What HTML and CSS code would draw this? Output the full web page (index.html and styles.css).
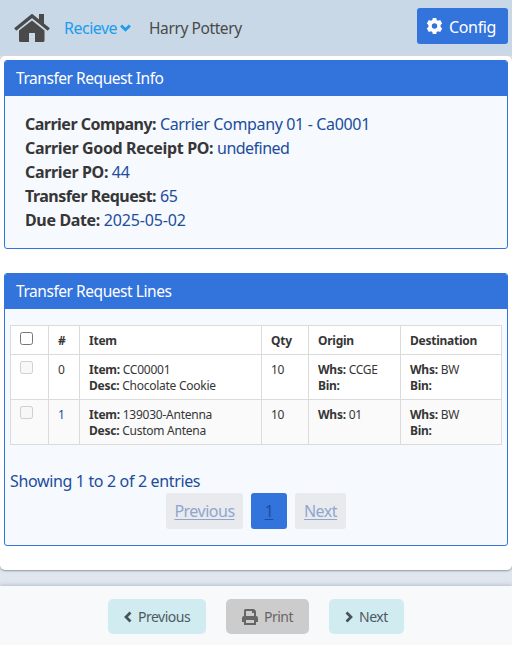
FILE: index.html
```html
<!DOCTYPE html>
<html lang="en">
<head>
<meta charset="utf-8">
<title>Transfer Request</title>
<link rel="stylesheet" href="styles.css">
</head>
<body>
<header class="navbar">
  <svg class="home" viewBox="0 0 36 28"><path fill="none" stroke="#4a4a4a" stroke-width="3.400" d="M1.200 15.500 18 1.900 34.800 15.500"/><path fill="#4a4a4a" d="M25 0h5v10l-5-4zM18 6.500 30.500 16.500v10q0 1.500-1.500 1.500H21v-9h-6v9H6.500q-1.500 0-1.500-1.500v-10z"/></svg>
  <div class="menu"><span>Recieve</span><svg class="caret" viewBox="0 0 10 7"><path d="M1 1.300 5 5.100 9 1.300"/></svg></div>
  <span class="user">Harry Pottery</span>
  <button class="config"><svg viewBox="0 0 16 16"><path fill="#fff" fill-rule="evenodd" d="M6.300 0h3.400l.5 2 1.300.8 2.200-.7 2 3.300-1.600 1.600v2l1.600 1.600-2 3.300-2.200-.7-1.300.8-.5 2H6.300l-.5-2-1.300-.8-2.200.7-2-3.300L1.900 9V7L.3 5.400l2-3.300 2.200.7L5.800 2zM8 5.300a2.700 2.700 0 1 0 0 5.400 2.700 2.700 0 0 0 0-5.400z"/></svg><span>Config</span></button>
</header>
<main class="card">
  <section class="panel info">
    <h2>Transfer Request Info</h2>
    <div class="details">
      <p><b class="tight">Carrier Company:</b> <span>Carrier Company 01 - Ca0001</span></p>
      <p><b>Carrier Good Receipt PO:</b> <span class="tight">undefined</span></p>
      <p><b>Carrier PO:</b> <span>44</span></p>
      <p><b class="tight">Transfer Request:</b> <span>65</span></p>
      <p><b>Due Date:</b> <span class="date">2025-05-02</span></p>
    </div>
  </section>
  <section class="panel lines">
    <h2>Transfer Request Lines</h2>
    <table>
      <colgroup><col class="c-check"><col class="c-num"><col class="c-item"><col class="c-qty"><col class="c-origin"><col class="c-dest"></colgroup>
      <thead><tr><th><input type="checkbox"></th><th>#</th><th>Item</th><th>Qty</th><th>Origin</th><th>Destination</th></tr></thead>
      <tbody>
        <tr><td><input type="checkbox" disabled></td><td>0</td><td><b>Item:</b> CC00001<br><b>Desc:</b> Chocolate Cookie</td><td>10</td><td><b>Whs:</b> CCGE<br><b>Bin:</b></td><td><b>Whs:</b> BW<br><b>Bin:</b></td></tr>
        <tr><td><input type="checkbox" disabled></td><td class="blue">1</td><td><b>Item:</b> 139030-Antenna<br><b>Desc:</b> Custom Antena</td><td>10</td><td><b>Whs:</b> 01</td><td><b>Whs:</b> BW<br><b>Bin:</b></td></tr>
      </tbody>
    </table>
    <div class="summary">Showing 1 to 2 of 2 entries</div>
    <nav class="pages"><a class="prev">Previous</a><a class="current">1</a><a class="next">Next</a></nav>
  </section>
</main>
<footer>
  <button class="back"><svg class="chev" viewBox="0 0 8 12"><path d="M6.500 1.500 2 6l4.500 4.500"/></svg><span>Previous</span></button>
  <button class="print"><svg class="printer" viewBox="0 0 16 16"><path fill="#666" fill-rule="evenodd" d="M2 7V1.500Q2 0 3.500 0H12l2 2v5q2 0 2 2v4h-2v3H2v-3H0V9q0-2 2-2zM4 2v5h8V4h-2V2zM4 11v3h8v-3z"/></svg><span>Print</span></button>
  <button class="forward"><svg class="chev" viewBox="0 0 8 12"><path d="M1.500 1.500 6 6l-4.500 4.500"/></svg><span>Next</span></button>
</footer>
</body>
</html>
```
FILE: styles.css
```css
* { box-sizing: border-box; }
body {
  margin: 0;
  height: 645px;
  display: flex;
  flex-direction: column;
  overflow: hidden;
  background: #dfe6ee;
  color: #363636;
  font: 16px/24px "Noto Sans", "Open Sans", sans-serif;
  letter-spacing: -0.35px;
  white-space: nowrap;
}
h2, p { margin: 0; font-weight: 400; }
button { border: 0; margin: 0; padding: 0; font: inherit; letter-spacing: inherit; display: flex; align-items: center; }
svg { display: block; flex: none; }
.navbar { height: 56px; flex: none; display: flex; align-items: center; padding: 0 4px 0 14px; background: #c8d8e6; color: #4a4a4a; }
.home { width: 36px; height: 28px; }
.menu { display: flex; align-items: center; width: 67px; margin-left: 14px; color: #209cee; justify-content: space-between; letter-spacing: -0.5px; }
.caret { width: 11px; height: 8px; fill: none; stroke: #209cee; stroke-width: 2.6; }
.user { margin-left: 18px; font-size: 15.5px; letter-spacing: -0.4px; }
.config { margin: -4px 0 0 auto; width: 91px; height: 36px; border-radius: 3px; background: #3273dc; color: #fff; padding-left: 9px; gap: 6px; }
.config svg { width: 17px; height: 16px; }
.config span { padding-top: 1px; }
.card { height: 514px; flex: none; padding: 4px; background: #fff; border-radius: 5px; box-shadow: 0 1px 2px #8c969e, 0 -1px 2px #dedcd8; }
.panel { border: 1px solid #3273dc; border-radius: 3px; background: #f6f9fe; overflow: hidden; color: #204d9b; }
.panel h2 { height: 35px; padding: 0 11px; background: #3273dc; color: #fff; font-size: 15.5px; line-height: 35px; letter-spacing: -0.45px; }
.info { height: 189px; }
.details { padding: 16px 20px; }
.details b { color: #363636; }
.tight { letter-spacing: -0.52px; }
.date { letter-spacing: -0.15px; }
.lines { height: 273px; margin-top: 24px; }
table { width: 492px; margin: 16px 0 0 5px; border-collapse: collapse; table-layout: fixed; background: #fff; color: #363636; font-size: 12px; line-height: 16px; letter-spacing: -0.25px; }
th, td { border: 1px solid #dbdbdb; padding: 7px 9px 5px; text-align: left; vertical-align: top; }
td { height: 45px; }
th { height: 29px; }
tbody tr:nth-child(2) { background: #fafafa; }
.blue { color: #204d9b; }
.c-check { width: 38px; }
.c-num { width: 31px; }
.c-item { width: 182px; }
.c-qty { width: 47px; }
.c-origin { width: 92px; }
.c-dest { width: 101px; }
input { display: block; width: 13px; height: 13px; margin: -1px 0 0; }
.summary { margin: 24px 0 0 5px; height: 24px; }
.pages { display: flex; justify-content: center; gap: 8px; }
.pages a { display: flex; align-items: center; justify-content: center; height: 36px; border-radius: 3px; background: #e9eaed; color: #8fa6cd; text-decoration: underline; text-underline-offset: 2px; text-decoration-thickness: 1px; letter-spacing: -0.5px; }
.pages .prev { width: 77px; }
.pages .current { width: 36px; background: #3273dc; color: #204d9b; }
.pages .next { width: 51px; }
footer { margin-top: 16px; flex: 1; display: flex; justify-content: center; gap: 20px; padding-top: 13px; background: #f8f9fb; box-shadow: 0 -1px 4px #b8bec5; font-size: 14px; letter-spacing: -0.5px; }
footer button { height: 35px; border-radius: 5px; background: #d1ecf0; color: #4f5960; padding-left: 16px; }
.back { width: 98px; }
.print { width: 83px; background: #ccc; color: #666; gap: 6px; }
.forward { width: 75px; }
.chev { width: 8px; height: 12px; margin-right: 6px; fill: none; stroke: #46525a; stroke-width: 2.7; }
.printer { width: 16px; height: 16px; }
```
